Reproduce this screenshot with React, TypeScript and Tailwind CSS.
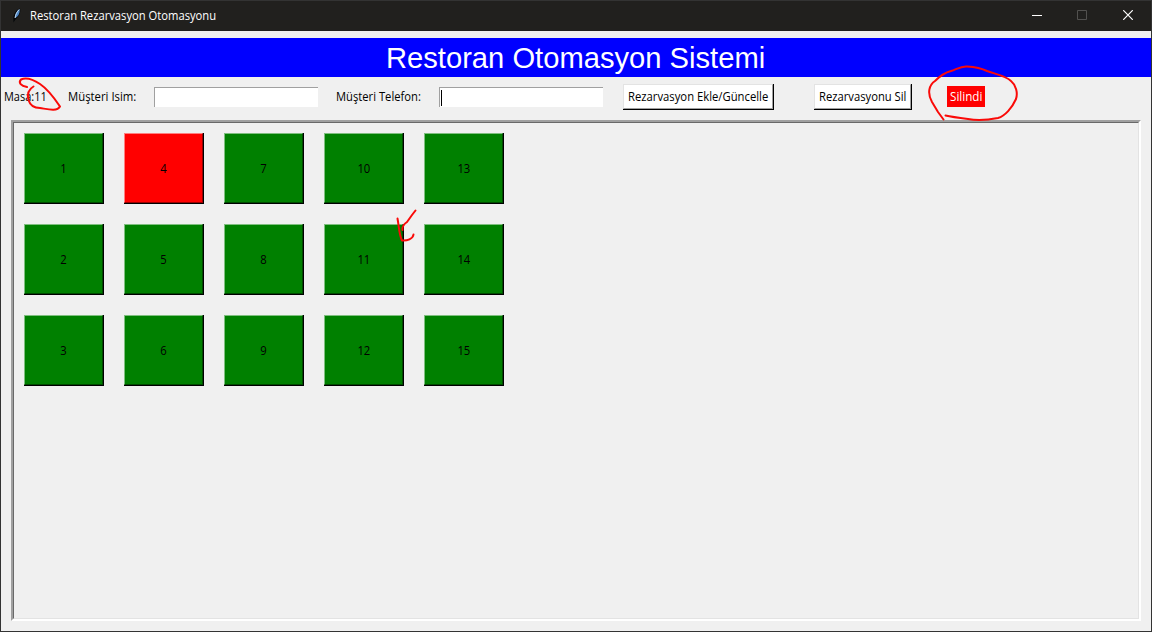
import React from "react";

const columns = [
  [1, 2, 3],
  [4, 5, 6],
  [7, 8, 9],
  [10, 11, 12],
  [13, 14, 15],
];

function Label({ text, width, fill = "#000" }: { text: string; width: number; fill?: string }) {
  const ref = React.useRef<HTMLSpanElement>(null);
  const [scale, setScale] = React.useState(1);
  React.useLayoutEffect(() => {
    if (ref.current) setScale(width / ref.current.offsetWidth);
  }, [width]);
  return (
    <span className="block shrink-0 whitespace-nowrap" style={{ width, color: fill }}>
      <span ref={ref} className="inline-block origin-left" style={{ transform: `scaleX(${scale})` }}>
        {text}
      </span>
    </span>
  );
}

function Entry({ active = false }: { active?: boolean }) {
  return (
    <div className="flex h-5 w-[164px] shrink-0 items-center border-t border-l border-[#a0a0a0] bg-white pl-px">
      {active && <div className="h-4 w-px bg-black" />}
    </div>
  );
}

function ActionButton({ text, width }: { text: string; width: number }) {
  return (
    <button className="h-[26px] shrink-0 border-r border-b border-black bg-white">
      <span className="flex h-[25px] items-center border border-t-[#e3e3e3] border-r-[#a0a0a0] border-b-[#a0a0a0] border-l-[#e3e3e3] px-1 pt-px">
        <Label text={text} width={width} />
      </span>
    </button>
  );
}

function TableButton({ n }: { n: number }) {
  const booked = n === 4;
  return (
    <button className="h-[71px] w-20 border-r border-b border-black">
      <span
        className={
          "flex h-[70px] w-[79px] items-center justify-center border pt-0.5 pl-[.5px] " +
          (booked
            ? "border-t-[#ff7f7f] border-r-[#990000] border-b-[#990000] border-l-[#ff7f7f] bg-[#ff0000]"
            : "border-t-[#7fbf7f] border-r-[#004b00] border-b-[#004b00] border-l-[#7fbf7f] bg-[#008000]")
        }
      >
        <span className="origin-center scale-x-[.94]">{n}</span>
      </span>
    </button>
  );
}

export default function App() {
  return (
    <div className="relative flex h-[632px] w-[1152px] flex-col overflow-hidden border border-[#333] bg-[#f0f0f0] font-['Open_Sans','Noto_Sans',sans-serif] text-[12px] leading-4 text-black">
      <header className="flex h-[30px] shrink-0 items-center bg-[#21201e] text-white">
        <svg className="ml-2 h-4 w-4" viewBox="0 0 16 16">
          <path d="M4.500 14.500L4.300 10C4.500 6 7.500 1 11 .5c1 3.500-.6 8-4.600 11z" fill="#05070a" />
          <path d="M6 10C5.800 6 8 2.500 10.500 1.200c.7 3-.8 6.500-3.500 8.300z" fill="#4d87c7" />
          <path d="M10.200 1.500C7.500 4.200 6.500 7 6 10" fill="none" stroke="#d5e8fa" strokeWidth=".9" />
        </svg>
        <div className="ml-[5px]">
          <Label text="Restoran Rezarvasyon Otomasyonu" width={186} fill="#fff" />
        </div>
        <div className="mr-[18px] mb-0.5 ml-auto flex items-center">
          <svg className="h-[10px] w-[10px]" viewBox="0 0 10 10"><path d="M0 5.500h10" stroke="#fff" /></svg>
          <svg className="ml-[35px] h-[10px] w-[10px]" viewBox="0 0 10 10"><path d="M.5.500h9v9h-9z" stroke="#52514f" fill="none" /></svg>
          <svg className="ml-9 h-[10px] w-[10px]" viewBox="0 0 10 10"><path d="M.2.200l9.600 9.600M9.800.200l-9.600 9.600" stroke="#fff" strokeWidth="1.200" /></svg>
        </div>
      </header>

      <h1 className="mt-[7px] flex h-[39px] shrink-0 items-center bg-[#0000ff] pt-0.5 pl-[385px] font-['Liberation_Sans',Arial,sans-serif] text-[29px] leading-[37px] text-white">
        <Label text="Restoran Otomasyon Sistemi" width={379} fill="#fff" />
      </h1>

      <div className="flex h-[43px] shrink-0 items-center pb-[3px] pl-[3px]">
        <Label text="Masa:11" width={43} />
        <div className="ml-[21px]"><Label text="Müşteri Isim:" width={68} /></div>
        <div className="ml-[18px]"><Entry /></div>
        <div className="ml-[18px]"><Label text="Müşteri Telefon:" width={85} /></div>
        <div className="ml-[18px]"><Entry active /></div>
        <div className="ml-5"><ActionButton text="Rezarvasyon Ekle/Güncelle" width={140} /></div>
        <div className="ml-10"><ActionButton text="Rezarvasyonu Sil" width={87} /></div>
        <div className="mb-px ml-[35px] flex h-[21px] w-[38px] items-center justify-center bg-[#ff0000] pt-px">
          <Label text="Silindi" width={32} fill="#fff" />
        </div>
      </div>

      <main className="mx-[10px] h-[501px] shrink-0 border-2 border-t-[#a0a0a0] border-r-white border-b-white border-l-[#a0a0a0]">
        <div className="flex h-full gap-5 border border-t-[#696969] border-r-[#e3e3e3] border-b-[#e3e3e3] border-l-[#696969] px-[10px] pt-[10px]">
          {columns.map((column) => (
            <div key={column[0]} className="flex flex-col gap-5">
              {column.map((n) => <TableButton key={n} n={n} />)}
            </div>
          ))}
        </div>
      </main>

      <svg className="pointer-events-none absolute -top-px -left-px h-[632px] w-[1152px]" viewBox="0 0 1152 632" fill="none" stroke="#fa0a08" strokeWidth="2" strokeLinecap="round" strokeLinejoin="round">
        <path d="M27 87C21 86 18 83 21 79.500C26 77 34 80 40 84C49 90 55 99 60 106.500C57 112 47 109 40 108C34 108 30 105 28.500 100C27 94 29 89 33.500 86.500" />
        <path d="M415.500 210.500L412 215L407 222C404 224 402 226 402.500 230M397.500 218.500C399 226 399 235 402 240.500C407 241 413 239 413.500 234.500" />
        <path d="M943.500 119.500L938 112L932 102C927 93 929 85 935 81C939 77 943 73 951 71C957 69 961 66 967 66.500C975 67 981 68 987 71C995 74 1006 76 1011 81C1016 85 1018 93 1016 99C1012 108 1005 116 998 118C988 120 978 121 968 119C960 118 952 117 945.500 115.500" />
      </svg>
    </div>
  );
}
